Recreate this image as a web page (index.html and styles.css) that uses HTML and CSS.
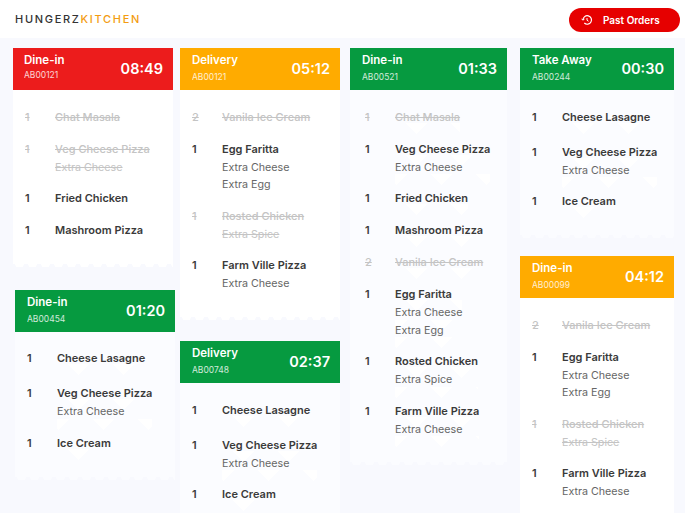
FILE: index.html
```html
<!DOCTYPE html>
<html lang="en">
<head>
    <meta charset="UTF-8">
    <meta name="viewport" content="width=device-width, initial-scale=1.0">
    <title>Hungerz Kitchen</title>
    <link rel="stylesheet" href="styles.css">
</head>
<body>
    <header class="top-bar">
        <div class="logo">HUNGERZ<span>KITCHEN</span></div>
        <button class="past-btn">
            <svg class="past-icon" viewBox="0 0 24 24" width="12" height="12" fill="none" stroke="#fff" stroke-width="2.4">
                <path d="M4 12a8.5 8.5 0 1 1 2.6 6.1"/>
                <path d="M1 9.5l3 3 3-3" stroke-width="2"/>
                <path d="M12 8v4.5l3 2" stroke-width="2"/>
            </svg>
            Past Orders
        </button>
    </header>

    <main class="board">
        <div class="col">
            <section class="order bright">
                <div class="order-head red">
                    <div><h2>Dine-in</h2><p>AB00121</p></div>
                    <div class="time">08:49</div>
                </div>
                <ul class="items">
                    <li class="done"><span class="qty">1</span><div class="info"><b>Chat Masala</b></div></li>
                    <li class="done"><span class="qty">1</span><div class="info"><b>Veg Cheese Pizza</b><i>Extra Cheese</i></div></li>
                    <li><span class="qty">1</span><div class="info"><b>Fried Chicken</b></div></li>
                    <li><span class="qty">1</span><div class="info"><b>Mashroom Pizza</b></div></li>
                </ul>
            </section>
            <section class="order shifted">
                <div class="order-head green">
                    <div><h2>Dine-in</h2><p>AB00454</p></div>
                    <div class="time">01:20</div>
                </div>
                <ul class="items">
                    <li class="tall"><span class="qty">1</span><div class="info"><b>Cheese Lasagne</b></div></li>
                    <li><span class="qty">1</span><div class="info"><b>Veg Cheese Pizza</b><i>Extra Cheese</i></div></li>
                    <li><span class="qty">1</span><div class="info"><b>Ice Cream</b></div></li>
                </ul>
            </section>
        </div>

        <div class="col">
            <section class="order bright">
                <div class="order-head amber">
                    <div><h2>Delivery</h2><p>AB00121</p></div>
                    <div class="time">05:12</div>
                </div>
                <ul class="items">
                    <li class="done"><span class="qty">2</span><div class="info"><b>Vanila Ice Cream</b></div></li>
                    <li><span class="qty">1</span><div class="info"><b>Egg Faritta</b><i>Extra Cheese</i><i>Extra Egg</i></div></li>
                    <li class="done"><span class="qty">1</span><div class="info"><b>Rosted Chicken</b><i>Extra Spice</i></div></li>
                    <li><span class="qty">1</span><div class="info"><b>Farm Ville Pizza</b><i>Extra Cheese</i></div></li>
                </ul>
            </section>
            <section class="order">
                <div class="order-head green">
                    <div><h2>Delivery</h2><p>AB00748</p></div>
                    <div class="time">02:37</div>
                </div>
                <ul class="items">
                    <li class="tall"><span class="qty">1</span><div class="info"><b>Cheese Lasagne</b></div></li>
                    <li><span class="qty">1</span><div class="info"><b>Veg Cheese Pizza</b><i>Extra Cheese</i></div></li>
                    <li><span class="qty">1</span><div class="info"><b>Ice Cream</b></div></li>
                </ul>
            </section>
        </div>

        <div class="col">
            <section class="order">
                <div class="order-head green">
                    <div><h2>Dine-in</h2><p>AB00521</p></div>
                    <div class="time">01:33</div>
                </div>
                <ul class="items">
                    <li class="done"><span class="qty">1</span><div class="info"><b>Chat Masala</b></div></li>
                    <li><span class="qty">1</span><div class="info"><b>Veg Cheese Pizza</b><i>Extra Cheese</i></div></li>
                    <li><span class="qty">1</span><div class="info"><b>Fried Chicken</b></div></li>
                    <li><span class="qty">1</span><div class="info"><b>Mashroom Pizza</b></div></li>
                    <li class="done"><span class="qty">2</span><div class="info"><b>Vanila Ice Cream</b></div></li>
                    <li><span class="qty">1</span><div class="info"><b>Egg Faritta</b><i>Extra Cheese</i><i>Extra Egg</i></div></li>
                    <li><span class="qty">1</span><div class="info"><b>Rosted Chicken</b><i>Extra Spice</i></div></li>
                    <li><span class="qty">1</span><div class="info"><b>Farm Ville Pizza</b><i>Extra Cheese</i></div></li>
                </ul>
            </section>
        </div>

        <div class="col">
            <section class="order">
                <div class="order-head green">
                    <div><h2>Take Away</h2><p>AB00244</p></div>
                    <div class="time">00:30</div>
                </div>
                <ul class="items">
                    <li class="tall"><span class="qty">1</span><div class="info"><b>Cheese Lasagne</b></div></li>
                    <li><span class="qty">1</span><div class="info"><b>Veg Cheese Pizza</b><i>Extra Cheese</i></div></li>
                    <li><span class="qty">1</span><div class="info"><b>Ice Cream</b></div></li>
                </ul>
            </section>
            <section class="order bright">
                <div class="order-head amber">
                    <div><h2>Dine-in</h2><p>AB00099</p></div>
                    <div class="time">04:12</div>
                </div>
                <ul class="items">
                    <li class="done"><span class="qty">2</span><div class="info"><b>Vanila Ice Cream</b></div></li>
                    <li><span class="qty">1</span><div class="info"><b>Egg Faritta</b><i>Extra Cheese</i><i>Extra Egg</i></div></li>
                    <li class="done"><span class="qty">1</span><div class="info"><b>Rosted Chicken</b><i>Extra Spice</i></div></li>
                    <li><span class="qty">1</span><div class="info"><b>Farm Ville Pizza</b><i>Extra Cheese</i></div></li>
                </ul>
            </section>
        </div>
    </main>
</body>
</html>
```

FILE: styles.css
```css
*{
    box-sizing: border-box;
}
html,body{
    height: 100%;
    overflow: hidden;
}
body{
    margin: 0;
    font-family: "Inter", "Liberation Sans", sans-serif;
    background-color: #f8f9fe;
    color: #3a3a3a;
}
.top-bar{
    height: 38px;
    background-color: #fff;
    display: flex;
    justify-content: space-between;
    align-items: center;
    padding: 0 5px 0 15px;
}
.logo{
    font-size: 11px;
    font-weight: 500;
    letter-spacing: 1.7px;
    color: #333;
}
.logo span{
    color: #f39c12;
}
.past-btn{
    width: 111px;
    height: 24px;
    border: none;
    border-radius: 12px;
    background-color: #e60000;
    color: #fff;
    font-family: inherit;
    font-size: 10px;
    font-weight: 600;
    display: flex;
    align-items: center;
    padding: 0 0 0 12px;
    margin-bottom: -1px;
}
.past-icon{
    margin-right: 10px;
}
.board{
    display: grid;
    grid-template-columns: 160px 160px 160px 160px;
    column-gap: 7px;
    padding: 10px 0 0 13px;
}
.order{
    margin-bottom: 24.5px;
}
.col:nth-child(1) .order{
    margin-bottom: 25.5px;
}
.order.shifted{
    margin-left: 2px;
    margin-right: -2px;
}
.col:nth-child(n+3){
    margin-left: 3px;
}
.col:nth-child(3) .items{
    padding-left: 15px;
}
.col:nth-child(4){
    margin-left: 6px;
}
.col:nth-child(4) .order{
    margin-bottom: 21px;
}
.order-head{
    height: 42px;
    padding: 5px 10px 0 12px;
    display: flex;
    justify-content: space-between;
    color: #fff;
}
.order-head h2{
    margin: 0;
    font-size: 11.5px;
    line-height: 15px;
    font-weight: 600;
}
.order-head p{
    margin: 3px 0 0;
    font-size: 8.5px;
    line-height: 12px;
    opacity: 0.8;
}
.order-head.red{
    padding-left: 11px;
}
.order-head.red p{
    margin-top: 1px;
}
.time{
    font-size: 14.5px;
    font-weight: 600;
    line-height: 32px;
}
.red{
    background-color: #ec1c1c;
}
.amber{
    background-color: #ffab00;
}
.green{
    background-color: #069a40;
}
.items{
    position: relative;
    list-style: none;
    margin: 0;
    padding: 18.5px 12px 10px;
    background-color: #fbfcff;
}
/* ticket edge along the bottom of the card */
.items::after{
    content: "";
    position: absolute;
    left: 0;
    right: 0;
    top: 100%;
    height: 3px;
    background: radial-gradient(circle at 50% 0, #fbfcff 4px, transparent 4.5px) 0 0 / 13px 3px repeat-x;
}
.bright .items{
    background-color: #fff;
}
.bright .items::after{
    background-image: radial-gradient(circle at 50% 0, #fff 4px, transparent 4.5px);
}
.items li{
    display: flex;
    min-height: 18px;
    margin-bottom: 14px;
    font-size: 11px;
    line-height: 16px;
}
.items li.tall{
    margin-bottom: 17px;
}
.qty{
    width: 30px;
    font-weight: 600;
}
.info{
    width: fit-content;
}
/* faint white notches behind the item text */
.info b,
.info i{
    display: block;
    padding-bottom: 9px;
    margin-bottom: -9px;
    background: conic-gradient(from -45deg at 50% 100%, #fff 90deg, transparent 0) -1px 100% / 45px 11px repeat-x;
}
.info b{
    font-weight: 600;
}
.info i{
    font-style: normal;
    font-size: 10.7px;
    margin-top: 2px;
    line-height: 17.5px;
    color: #666;
    background-position: 24px 100%;
}
.info i + i{
    margin-top: 0;
}
.done,
.done .info i{
    color: #c4c4c4;
}
.done .qty,
.done .info b{
    font-weight: 500;
}
.done .qty,
.done .info b,
.done .info i{
    text-decoration: line-through;
}
```
